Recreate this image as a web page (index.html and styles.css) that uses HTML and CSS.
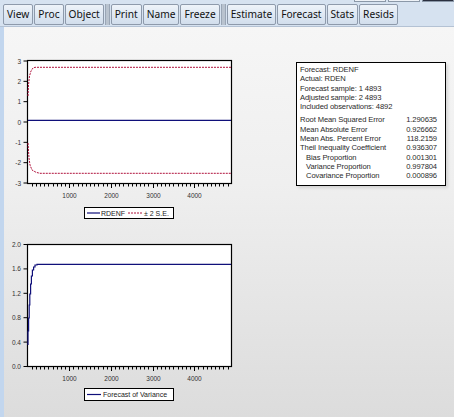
FILE: index.html
```html
<html>
    <head>
        <meta name="viewport" content="width=device-width, initial-scale=1.0">
        <link rel="stylesheet" href="styles.css">
    </head>
    <body>
        <div class="window">
            <div class="topedge">
                <span class="edge-btn"></span>
                <span class="edge-btn"></span>
                <span class="edge-btn dark"></span>
            </div>
            <div class="toolbar">
                <button>View</button><button>Proc</button><button>Object</button>
                <span class="sep"></span>
                <button>Print</button><button>Name</button><button>Freeze</button>
                <span class="sep"></span>
                <button>Estimate</button><button>Forecast</button><button>Stats</button><button>Resids</button>
            </div>
            <div class="main">
                <div class="charts">
                    <svg class="chart chart-top" viewBox="4 52 236 172" width="236" height="172">
                        <rect x="27.5" y="60.5" width="204" height="123" fill="#fff" stroke="#000" stroke-width="1.2"/>
                        <g class="ticks" id="yticks1"></g>
                        <g class="ticks" id="xticks1"></g>
                        <path d="M28,96 L28.5,85 L29.5,76 L31,71 L33,68 L35,67.3 L231,67.3" class="band"/>
                        <path d="M28,143 L29,158 L30,165 L32,170 L36,172.3 L40,173.3 L231,173.3" class="band"/>
                        <path d="M28,120.3 L231,120.3" class="series"/>
                        <rect x="84.5" y="207.5" width="89" height="11" fill="#fff" stroke="#000" stroke-width="1"/>
                        <path d="M87,213 L100,213" class="series"/>
                        <text x="101" y="215.5" class="legend">RDENF</text>
                        <path d="M128,213 L143,213" class="band"/>
                        <text x="144" y="215.5" class="legend">± 2 S.E.</text>
                    </svg>
                    <svg class="chart chart-bottom" viewBox="4 234 236 176" width="236" height="176">
                        <rect x="27.5" y="244.5" width="204" height="122" fill="#fff" stroke="#000" stroke-width="1.2"/>
                        <g class="ticks" id="yticks2"></g>
                        <g class="ticks" id="xticks2"></g>
                        <path d="M28,345 L28,331 L28.6,331 L28.6,318 L29.2,318 L29.2,305 L29.8,305 L29.8,294 L30.6,294 L30.6,284 L31.4,284 L31.4,276 L32.4,276 L32.4,270 L33.6,270 L33.6,267 L35,267 L35,265 L37,265 L37,264.3 L231,264.3" class="series"/>
                        <rect x="84.5" y="388.5" width="89" height="12" fill="#fff" stroke="#000" stroke-width="1"/>
                        <path d="M87,394.5 L101,394.5" class="series"/>
                        <text x="103" y="397" class="legend">Forecast of Variance</text>
                    </svg>
                </div>
                <div class="stats">
                    <table>
                        <tr><td colspan="2">Forecast: RDENF</td></tr>
                        <tr><td colspan="2">Actual: RDEN</td></tr>
                        <tr><td colspan="2">Forecast sample: 1 4893</td></tr>
                        <tr><td colspan="2">Adjusted sample: 2 4893</td></tr>
                        <tr><td colspan="2">Included observations: 4892</td></tr>
                        <tr class="first-num"><td>Root Mean Squared Error</td><td class="num">1.290635</td></tr>
                        <tr><td>Mean Absolute Error</td><td class="num">0.926662</td></tr>
                        <tr><td>Mean Abs. Percent Error</td><td class="num">118.2159</td></tr>
                        <tr><td>Theil Inequality Coefficient</td><td class="num">0.936307</td></tr>
                        <tr><td class="indent">Bias Proportion</td><td class="num">0.001301</td></tr>
                        <tr><td class="indent">Variance Proportion</td><td class="num">0.997804</td></tr>
                        <tr><td class="indent">Covariance Proportion</td><td class="num">0.000896</td></tr>
                    </table>
                </div>
            </div>
        </div>

        <script>
            // axis ticks, all in page pixels
            const NS = 'http://www.w3.org/2000/svg';
            const X0 = 27.5, XW = 204, NOBS = 4893;
            const xpos = (v) => X0 + v * XW / NOBS;

            const add = (parent, tag, attrs, text) => {
                const el = document.createElementNS(NS, tag);
                for (const k in attrs) el.setAttribute(k, attrs[k]);
                if (text) el.textContent = text;
                parent.appendChild(el);
            };

            const yTicks = (id, top, bottom, labels) => {
                const g = document.getElementById(id);
                const step = (bottom - top) / (labels.length - 1);
                labels.forEach((l, i) => {
                    const y = top + i * step;
                    add(g, 'line', {x1: 23.5, x2: 27.5, y1: y, y2: y});
                    add(g, 'text', {x: 21, y: y + 2.5, 'text-anchor': 'end', class: 'axis'}, l);
                });
            };

            const xTicks = (id, base) => {
                const g = document.getElementById(id);
                for (let v = 100; v <= 4800; v += 100) {
                    const x = Math.round(xpos(v)) + 0.5;
                    const len = v % 1000 == 0 ? 4 : 2.5;
                    add(g, 'line', {x1: x, x2: x, y1: base, y2: base + len});
                    if (v % 1000 == 0) {
                        add(g, 'text', {x: x, y: base + 14, 'text-anchor': 'middle', class: 'axis'}, String(v));
                    }
                }
            };

            yTicks('yticks1', 61, 183, ['3', '2', '1', '0', '-1', '-2', '-3']);
            xTicks('xticks1', 184);
            yTicks('yticks2', 244.5, 366.5, ['2.0', '1.6', '1.2', '0.8', '0.4', '0.0']);
            xTicks('xticks2', 367);
        </script>
    </body>
</html>
```

FILE: styles.css
```css
html, body {
    margin: 0;
    padding: 0;
    width: 454px;
    height: 417px;
    overflow: hidden;
}
.window {
    display: flex;
    flex-direction: column;
    height: 417px;
    background: #d6e2f0;
}
.topedge {
    height: 2px;
    display: flex;
    justify-content: flex-end;
    gap: 2px;
}
.edge-btn {
    width: 32px;
    height: 2px;
    background: #eef2f7;
    border: 1px solid #8b98a8;
    border-top: none;
    box-sizing: border-box;
}
.edge-btn.dark {
    background: #2b3040;
}
.toolbar {
    display: flex;
    align-items: center;
    height: 24px;
    padding: 0 0 0 3px;
    border-bottom: 1px solid #b4c2d4;
}
.toolbar button {
    font-family: "Noto Sans", sans-serif;
    font-size: 10.2px;
    color: #111;
    height: 21px;
    margin: 0 1px 0 0;
    padding: 0 3px;
    border: 1px solid #8e9aab;
    border-radius: 2px;
    background: linear-gradient(#eef3f9, #dce6f2 60%, #d2deec);
}
.sep {
    width: 3px;
    height: 21px;
    margin: 0 1px 0 0;
    background: #b9c3cf;
    border-left: 1px solid #9aa6b6;
    border-right: 1px solid #9aa6b6;
}
.main {
    flex: 1;
    display: flex;
    align-items: flex-start;
    border-left: 4px solid #c2d6ee;
    background: linear-gradient(#f6f6f6, #efefef 40%, #dcdcdc);
}
.charts {
    display: flex;
    flex-direction: column;
    padding-top: 25px;
    gap: 10px;
}
.chart {
    display: block;
}
.ticks line {
    stroke: #000;
    stroke-width: 1;
}
.axis {
    font-family: "Liberation Sans", Arial, sans-serif;
    font-size: 6.5px;
    fill: #333;
}
.legend {
    font-family: "Liberation Sans", Arial, sans-serif;
    font-size: 7px;
    fill: #222;
}
.series {
    fill: none;
    stroke: #10107a;
    stroke-width: 1.2;
}
.band {
    fill: none;
    stroke: #b0123c;
    stroke-width: 1;
    stroke-dasharray: 2 1;
}
.stats {
    margin: 35px 0 0 56px;
    width: 150px;
    height: 124px;
    box-sizing: border-box;
    border: 1px solid #000;
    background: #fff;
    padding: 2px 8px 0 3px;
    box-shadow: 2px 2px 3px rgba(0, 0, 0, 0.12);
}
.stats table {
    border-collapse: collapse;
    width: 100%;
    font-family: "Liberation Sans", Arial, sans-serif;
    font-size: 7.6px;
    color: #2a2a2a;
    letter-spacing: -0.1px;
}
.stats td {
    padding: 0;
    height: 9.3px;
    line-height: 9.3px;
    white-space: nowrap;
}
.stats .first-num td {
    padding-top: 4px;
}
.stats .num {
    text-align: right;
}
.stats .indent {
    padding-left: 6px;
}
```
